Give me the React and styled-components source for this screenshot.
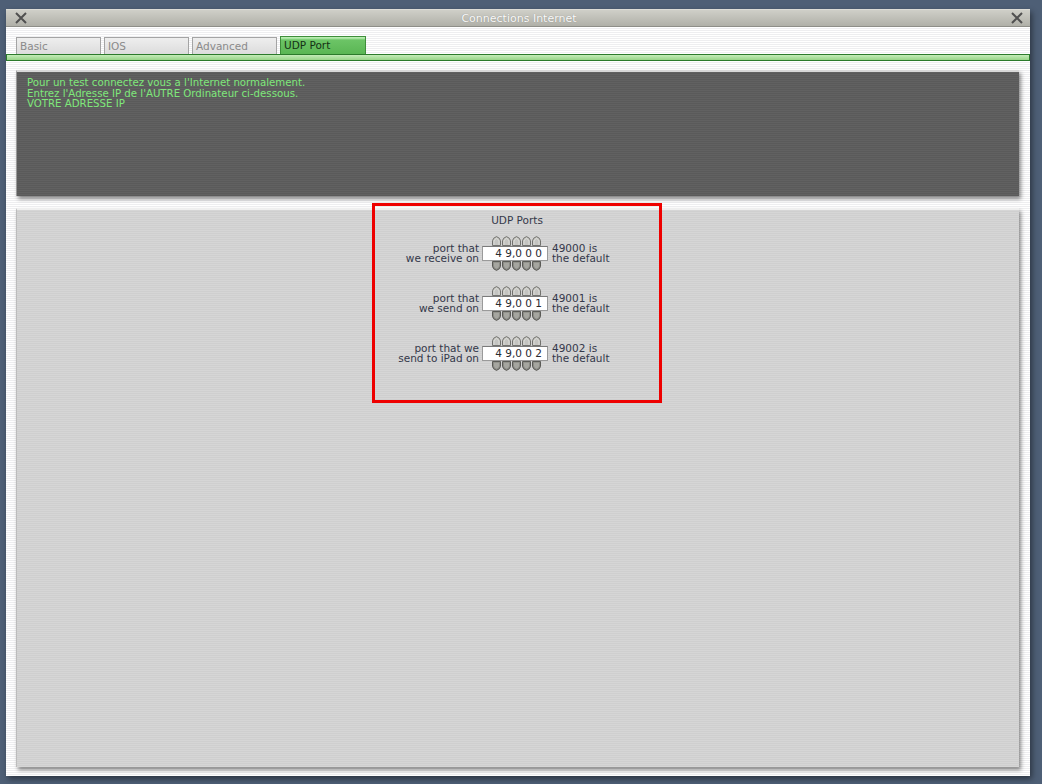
import React from "react";
import styled, { createGlobalStyle } from "styled-components";

const GlobalStyle = createGlobalStyle`
  html, body { margin: 0; padding: 0; }
  body {
    background: #4e5f76;
    font-family: "DejaVu Sans", Verdana, sans-serif;
    width: 1042px;
    height: 784px;
    overflow: hidden;
  }
`;

const Window = styled.div`
  margin: 9px 0 0 6px;
  width: 1024px;
  height: 767px;
  display: flex;
  flex-direction: column;
  background: repeating-linear-gradient(
    to bottom,
    #ffffff 0px,
    #ffffff 1px,
    #eeeef0 1px,
    #eeeef0 2px
  );
  box-shadow: 2px 3px 6px rgba(0, 0, 0, 0.45);
`;

const TitleBar = styled.div`
  height: 18px;
  flex: none;
  display: flex;
  align-items: center;
  justify-content: space-between;
  padding: 0 6px 0 8px;
  background: linear-gradient(to bottom, #cfcfc8, #b0b0a8);
  border-bottom: 1px solid #8e8e88;
  border-top: 1px solid #dcdcd6;
  box-sizing: border-box;
`;

const Title = styled.span`
  font-size: 11px;
  color: #fafafa;
  text-shadow: 0 0 1px rgba(0, 0, 0, 0.3);
`;

const CloseIcon = () => (
  <svg width="14" height="12" viewBox="0 0 14 12">
    <path d="M2 1 L12 11 M12 1 L2 11" stroke="#505050" strokeWidth="2" />
  </svg>
);

const TabRow = styled.div`
  display: flex;
  align-items: flex-end;
  gap: 3px;
  padding: 10px 0 0 10px;
  height: 17px;
  flex: none;
`;

const Tab = styled.div`
  width: ${(p) => (p.$active ? "86px" : "85px")};
  height: ${(p) => (p.$active ? "18px" : "17px")};
  box-sizing: border-box;
  font-size: 10.5px;
  line-height: 16px;
  padding-left: 3px;
  color: ${(p) => (p.$active ? "#143014" : "#8a8a8a")};
  background: ${(p) =>
    p.$active
      ? "linear-gradient(to bottom, #b8ecb0 0px, #b8ecb0 1px, #6cc466 3px, #5ab654 100%)"
      : "linear-gradient(to bottom, #eeeeee, #dcdcdc)"};
  border: 1px solid ${(p) => (p.$active ? "#3e8e3a" : "#a4a4a4")};
  border-bottom: none;
`;

const Strip = styled.div`
  height: 7px;
  flex: none;
  box-sizing: border-box;
  border: 1px solid #2b7a2b;
  background: linear-gradient(to bottom, #c4ecb8, #98d488);
`;

const Content = styled.div`
  flex: 1;
  display: flex;
  flex-direction: column;
  gap: 12px;
  padding: 9px 11px 9px 10px;
  min-height: 0;
`;

const MessagePanel = styled.div`
  height: 126px;
  flex: none;
  box-sizing: border-box;
  padding: 6px 10px;
  background: repeating-linear-gradient(
    to bottom,
    #616161 0px,
    #616161 1px,
    #5a5a5a 1px,
    #5a5a5a 2px
  );
  border-top: 2px solid #d8d8d8;
  border-left: 1px solid #9a9a9a;
  box-shadow: 2px 3px 4px rgba(0, 0, 0, 0.45);
  color: #7fe87a;
  font-size: 10.2px;
  line-height: 10.5px;
`;

const Line = styled.div``;

const PortsPanel = styled.div`
  flex: 1;
  display: flex;
  flex-direction: column;
  align-items: center;
  background: repeating-linear-gradient(
    to bottom,
    #d6d6d6 0px,
    #d6d6d6 1px,
    #cfcfcf 1px,
    #cfcfcf 2px
  );
  border-top: 2px solid #efefef;
  border-left: 1px solid #bcbcbc;
  box-shadow: 2px 3px 4px rgba(0, 0, 0, 0.45);
`;

const Highlight = styled.div`
  margin-top: -7px;
  margin-left: -2px;
  width: 290px;
  height: 200px;
  box-sizing: border-box;
  border: 3px solid #ee0000;
  display: flex;
  flex-direction: column;
  align-items: stretch;
  padding-top: 8px;
`;

const GroupTitle = styled.div`
  text-align: center;
  font-size: 10.5px;
  color: #34384a;
  line-height: 12px;
  margin-bottom: 9px;
`;

const Rows = styled.div`
  display: flex;
  flex-direction: column;
  gap: 13px;
`;

const Row = styled.div`
  display: grid;
  grid-template-columns: 104px 66px 1fr;
  column-gap: 3px;
  align-items: center;
`;

const Label = styled.div`
  text-align: right;
  font-size: 10.5px;
  line-height: 10px;
  color: #34384a;
  padding-bottom: 1px;
`;

const Note = styled(Label)`
  text-align: left;
  padding-left: 1px;
`;

const Spinner = styled.div`
  display: flex;
  flex-direction: column;
`;

const Arrows = styled.div`
  display: flex;
  gap: 1px;
  padding-left: 10px;
  height: 11px;
  align-items: ${(p) => (p.$down ? "flex-start" : "flex-end")};
`;

const Field = styled.div`
  height: 15px;
  box-sizing: border-box;
  background: #ffffff;
  border: 1px solid #9a9a9a;
  border-top-color: #7a7a7a;
  font-size: 10.5px;
  line-height: 13px;
  color: #2a2a30;
  text-align: right;
  padding-right: 5px;
  white-space: pre;
`;

const UpArrow = () => (
  <svg width="9" height="10" viewBox="0 0 9 10">
    <path
      d="M0.5 9.5 L0.5 4.8 Q0.8 1.8 4.5 0.6 Q8.2 1.8 8.5 4.8 L8.5 9.5 Z"
      fill="#c4c4c0"
      stroke="#72726e"
      strokeWidth="1"
    />
    <path d="M2 9 L2 5.2 Q2.4 3.2 4.5 2.4 Q6.6 3.2 7 5.2 L7 9" fill="none" stroke="#e2e2de" strokeWidth="0.8" />
  </svg>
);

const DownArrow = () => (
  <svg width="9" height="10" viewBox="0 0 9 10">
    <path
      d="M0.5 0.5 L8.5 0.5 L8.5 5.2 Q8.2 8.2 4.5 9.4 Q0.8 8.2 0.5 5.2 Z"
      fill="#8c8c86"
      stroke="#5a5a56"
      strokeWidth="1"
    />
    <path d="M2 1.8 L7 1.8 L7 5 Q6.6 7 4.5 7.7 Q2.4 7 2 5 Z" fill="#a6a6a0" />
  </svg>
);

const PortRow = ({ label, value, note }) => (
  <Row>
    <Label>
      {label[0]}
      <br />
      {label[1]}
    </Label>
    <Spinner>
      <Arrows>
        {[0, 1, 2, 3, 4].map((i) => (
          <UpArrow key={i} />
        ))}
      </Arrows>
      <Field>{value}</Field>
      <Arrows $down>
        {[0, 1, 2, 3, 4].map((i) => (
          <DownArrow key={i} />
        ))}
      </Arrows>
    </Spinner>
    <Note>
      {note}
      <br />
      the default
    </Note>
  </Row>
);

const ports = [
  { label: ["port that", "we receive on"], value: "4 9,0 0 0", note: "49000 is" },
  { label: ["port that", "we send on"], value: "4 9,0 0 1", note: "49001 is" },
  { label: ["port that we", "send to iPad on"], value: "4 9,0 0 2", note: "49002 is" },
];

export default function App() {
  return (
    <>
      <GlobalStyle />
      <Window>
        <TitleBar>
          <CloseIcon />
          <Title>Connections Internet</Title>
          <CloseIcon />
        </TitleBar>
        <TabRow>
          <Tab>Basic</Tab>
          <Tab>IOS</Tab>
          <Tab>Advanced</Tab>
          <Tab $active>UDP Port</Tab>
        </TabRow>
        <Strip />
        <Content>
          <MessagePanel>
            <Line>Pour un test connectez vous a l'Internet normalement.</Line>
            <Line>Entrez l'Adresse IP de l'AUTRE Ordinateur ci-dessous.</Line>
            <Line>VOTRE ADRESSE IP</Line>
          </MessagePanel>
          <PortsPanel>
            <Highlight>
              <GroupTitle>UDP Ports</GroupTitle>
              <Rows>
                {ports.map((p) => (
                  <PortRow key={p.note} {...p} />
                ))}
              </Rows>
            </Highlight>
          </PortsPanel>
        </Content>
      </Window>
    </>
  );
}
